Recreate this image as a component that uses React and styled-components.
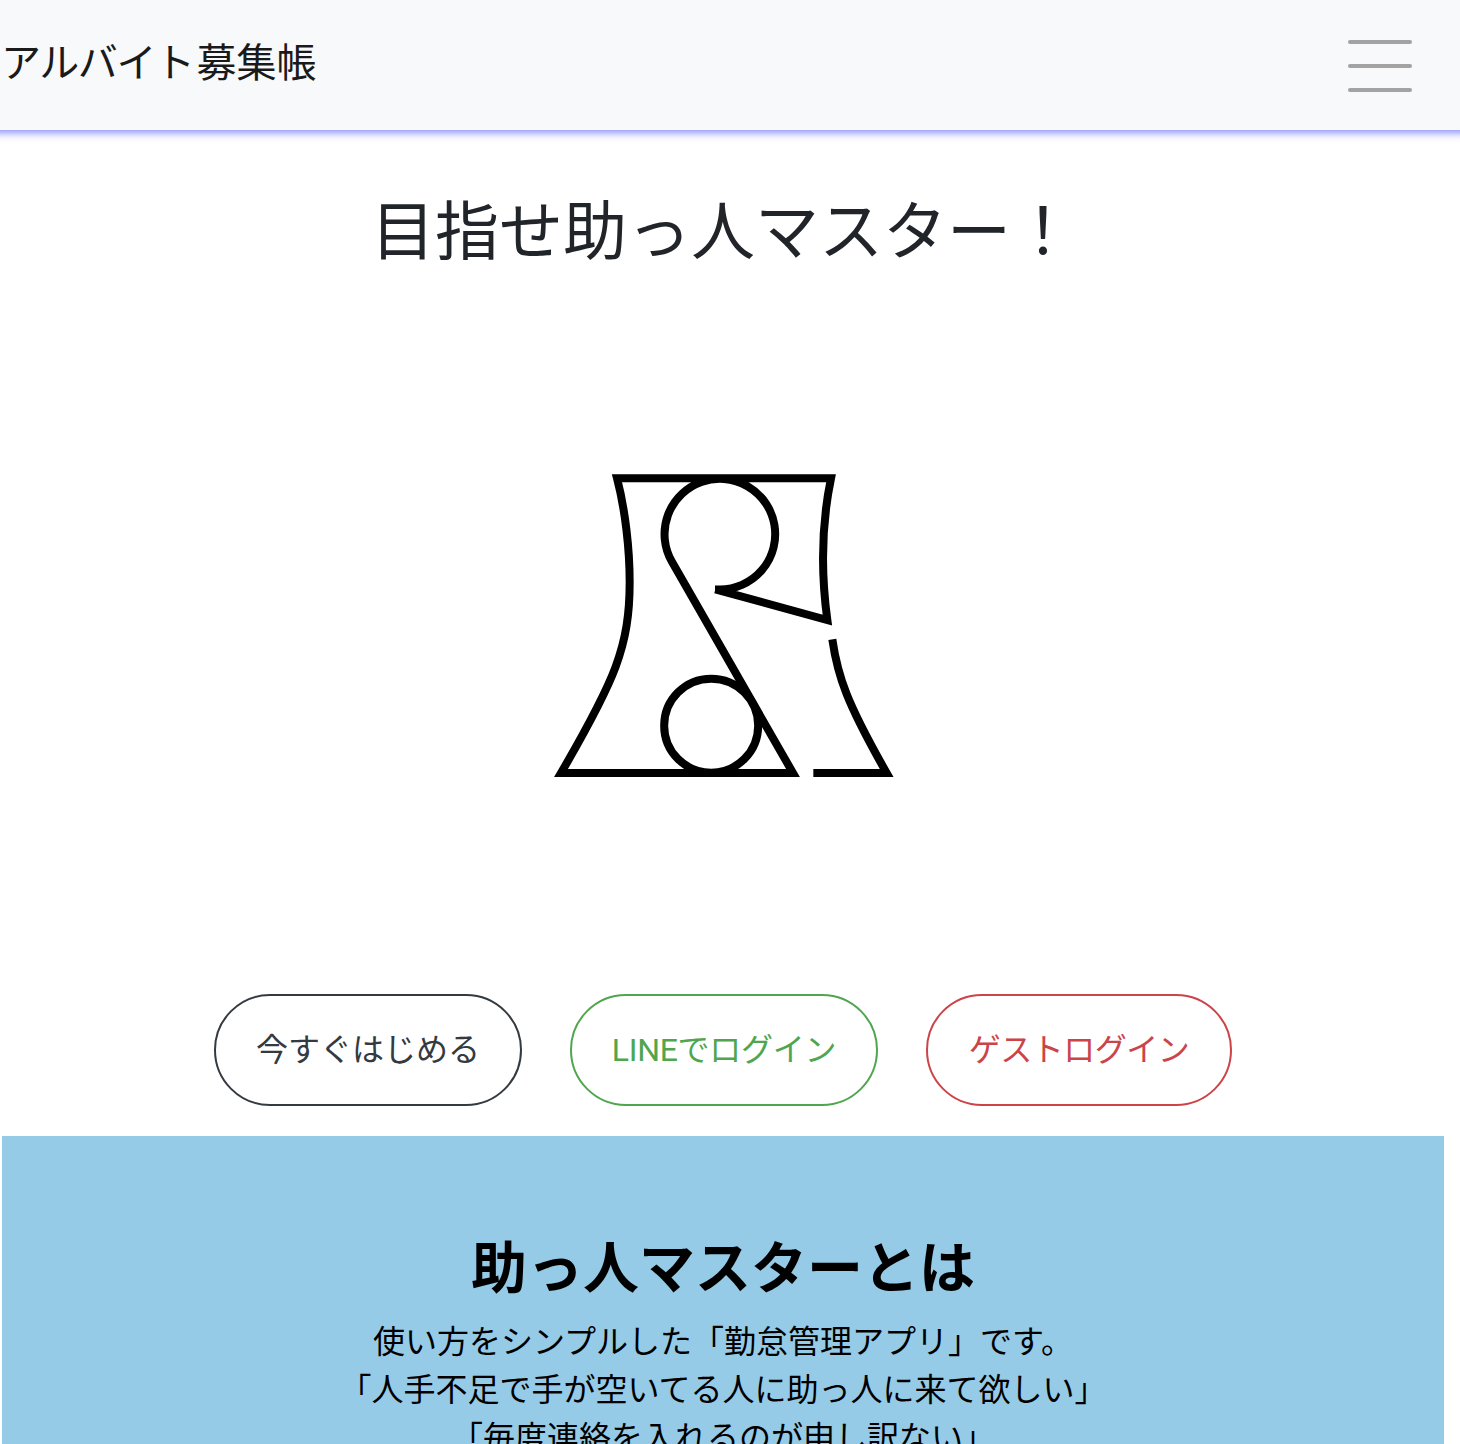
import React from 'react';
import styled, { createGlobalStyle } from 'styled-components';

const GlobalStyle = createGlobalStyle`
  *, *::before, *::after { box-sizing: border-box; }
  html, body { margin: 0; padding: 0; }
  body {
    height: 1444px;
    overflow: hidden;
    background: #fff;
    color: #212529;
    font-family: Roboto, "Noto Sans CJK JP", sans-serif;
    font-size: 32px;
    line-height: 48px;
  }
`;

const Header = styled.header`
  position: relative;
  display: flex;
  align-items: flex-start;
  justify-content: space-between;
  height: 130px;
  padding: 32px 48px 0 1px;
  background: #f8f9fb;
  box-shadow: 0 -5px 8px 8px rgba(0, 0, 255, 0.45);
`;

const Brand = styled.a`
  margin-top: 2px;
  font-size: 40px;
  line-height: 60px;
  color: #1a1a1a;
  white-space: nowrap;
`;

const Kana = styled.span`
  margin-right: 3px;
  letter-spacing: -1.4px;
`;

const MenuButton = styled.button`
  display: flex;
  flex-direction: column;
  gap: 20px;
  width: 64px;
  margin-top: 8px;
  padding: 0;
  border: 0;
  background: none;
`;

const MenuBar = styled.span`
  height: 4px;
  border-radius: 2px;
  background: #a3a3a3;
`;

const Main = styled.main`
  display: flex;
  flex-direction: column;
  width: 1442px;
  margin-left: 2px;
`;

const Title = styled.h1`
  margin: 65px 0 0;
  font-size: 64px;
  font-weight: 400;
  line-height: 76px;
  text-align: center;
`;

const Logo = styled.svg`
  display: block;
  width: 370px;
  height: 330px;
  margin: 189px 0 0 538px;
  fill: none;
  stroke: #000;
  stroke-width: 24;
  stroke-miterlimit: 10;
`;

const Actions = styled.div`
  display: flex;
  justify-content: center;
  gap: 48px;
  margin-top: 204px;
`;

const ActionButton = styled.button`
  width: ${(p) => p.$width}px;
  height: 112px;
  padding: 0;
  border: 2px solid ${(p) => p.$color};
  border-radius: 56px;
  background: transparent;
  color: ${(p) => p.$color};
  font: inherit;
  letter-spacing: ${(p) => p.$spacing || 0}px;
  white-space: nowrap;
`;

const About = styled.section`
  height: 308px;
  margin-top: 30px;
  padding-top: 98px;
  overflow: hidden;
  background: #96cbe7;
  color: #000;
  text-align: center;
`;

const AboutTitle = styled.h2`
  margin: 0 0 14px;
  font-size: 56px;
  font-weight: 700;
  line-height: 70px;
`;

const Line = styled.p`
  margin: 0;
  white-space: nowrap;
`;

export default function App() {
  return (
    <>
      <GlobalStyle />
      <Header>
        <Brand><Kana>アルバイト</Kana>募集帳</Brand>
        <MenuButton aria-label="menu">
          <MenuBar />
          <MenuBar />
          <MenuBar />
        </MenuButton>
      </Header>
      <Main>
        <Title>目指せ助っ人マスター！</Title>
        <Logo viewBox="0 0 1110 990">
          <path d="M526 388L862 480C843 340 843 200 873 55H231C256 150 269 270 269 365C269 560 225 660 63 939H759L395 304A166 166 0 1 1 539 388.500L525 388.500" />
          <circle cx="513.500" cy="797" r="141" />
          <path d="M877 538C893 650 921 730 1040 939H820" />
        </Logo>
        <Actions>
          <ActionButton $width={308} $color="#343a40">今すぐはじめる</ActionButton>
          <ActionButton $width={308} $color="#4fa64f" $spacing={-0.3}>LINEでログイン</ActionButton>
          <ActionButton $width={306} $color="#cb444a" $spacing={-0.5}>ゲストログイン</ActionButton>
        </Actions>
        <About>
          <AboutTitle>助っ人マスターとは</AboutTitle>
          <Line>使い方をシンプルした「勤怠管理アプリ」です。</Line>
          <Line>「人手不足で手が空いてる人に助っ人に来て欲しい」</Line>
          <Line>「毎度連絡を入れるのが申し訳ない」</Line>
        </About>
      </Main>
    </>
  );
}
